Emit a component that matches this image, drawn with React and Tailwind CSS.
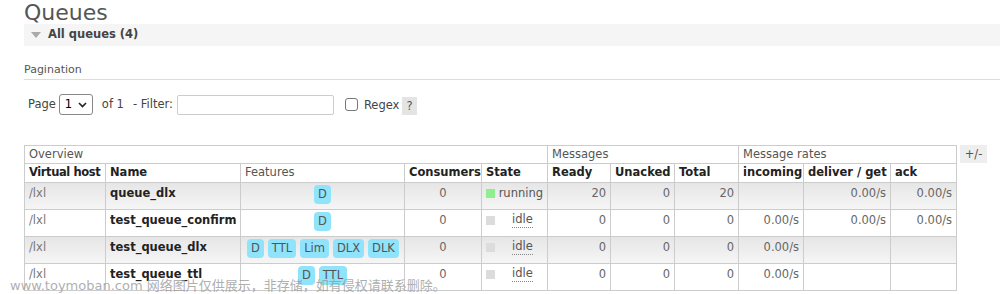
import React from "react";

const Badge = ({ children }) => (
  <span className="inline-block rounded-[4px] bg-[#8fe3fb] px-[4px] leading-[19px] h-[19px] text-[#555] mx-[2px]">
    {children}
  </span>
);

const rows = [
  { vh: "/lxl", name: "queue_dlx", features: ["D"], state: "running", ready: "20", unacked: "0", total: "20", incoming: "", deliver: "0.00/s", ack: "0.00/s" },
  { vh: "/lxl", name: "test_queue_confirm", features: ["D"], state: "idle", ready: "0", unacked: "0", total: "0", incoming: "0.00/s", deliver: "0.00/s", ack: "0.00/s" },
  { vh: "/lxl", name: "test_queue_dlx", features: ["D", "TTL", "Lim", "DLX", "DLK"], state: "idle", ready: "0", unacked: "0", total: "0", incoming: "0.00/s", deliver: "", ack: "" },
  { vh: "/lxl", name: "test_queue_ttl", features: ["D", "TTL"], state: "idle", ready: "0", unacked: "0", total: "0", incoming: "0.00/s", deliver: "", ack: "" },
];

const cellB = "border border-[#ccc] px-[4px] align-top";

export default function App() {
  return (
    <div
      className="relative w-[1000px] h-[294px] overflow-hidden bg-white text-[#444]"
      style={{ fontFamily: '"DejaVu Sans", Verdana, sans-serif' }}
    >
      <div className="pl-[24px] h-[24px] text-[22px] leading-[26px] text-[#555]">Queues</div>
      <div className="ml-[24px] h-[22px] bg-[#f5f5f5] flex items-center">
        <svg width="10" height="6" className="ml-[7px] mr-[7px]" viewBox="0 0 10 6">
          <polygon points="0,0 10,0 5,6" fill="#aaa" />
        </svg>
        <span className="text-[11.5px] font-bold text-[#444]">All queues (4)</span>
      </div>
      <div className="ml-[24px] mt-[17px] h-[17px] border-b border-[#ddd] text-[11px] leading-[14px] text-[#555]">
        Pagination
      </div>
      <div className="ml-[28px] mt-[14px] h-[21px] flex items-center text-[11.5px] text-[#444]">
        <span>Page</span>
        <span className="ml-[3px] w-[34px] h-[21px] border border-[#888] rounded-[3px] flex items-center justify-between px-[5px] text-black">
          <span>1</span>
          <svg width="9" height="6" viewBox="0 0 9 6"><polyline points="1,1 4.5,4.5 8,1" fill="none" stroke="#222" strokeWidth="1.6" /></svg>
        </span>
        <span className="ml-[9px]">of 1</span>
        <span className="ml-[9px]">- Filter:</span>
        <span className="ml-[4px] w-[157px] h-[20px] border border-[#ccc] rounded-[2px] bg-white" />
        <span className="ml-[11px] w-[13px] h-[13px] border border-[#777] rounded-[3px] bg-white" />
        <span className="ml-[6px] mt-[2px]">Regex</span>
        <span className="ml-[3px] mt-[2px] px-[4px] h-[18px] leading-[18px] bg-[#e4e4e4] text-[#555]">?</span>
      </div>

      <div className="ml-[24px] mt-[30px] flex items-start">
        <table className="table-fixed border-collapse text-[11.5px] w-[932px]">
          <colgroup>
            <col className="w-[81px]" />
            <col className="w-[135px]" />
            <col className="w-[164px]" />
            <col className="w-[77px]" />
            <col className="w-[66px]" />
            <col className="w-[63px]" />
            <col className="w-[64px]" />
            <col className="w-[64px]" />
            <col className="w-[65px]" />
            <col className="w-[87px]" />
            <col className="w-[66px]" />
          </colgroup>
          <thead>
            <tr className="h-[18px]">
              <th colSpan={5} className={`${cellB} font-normal text-left text-[#555] leading-[16px]`}>Overview</th>
              <th colSpan={3} className={`${cellB} font-normal text-left text-[#555] leading-[16px]`}>Messages</th>
              <th colSpan={3} className={`${cellB} font-normal text-left text-[#555] leading-[16px]`}>Message rates</th>
            </tr>
            <tr className="h-[19px] text-[#222] whitespace-nowrap">
              <th className={`${cellB} text-left leading-[17px] px-[3px] tracking-[-0.4px]`}>Virtual host</th>
              <th className={`${cellB} text-left leading-[17px]`}>Name</th>
              <th className={`${cellB} text-left font-normal text-[#555] leading-[17px]`}>Features</th>
              <th className={`${cellB} text-left leading-[17px]`}>Consumers</th>
              <th className={`${cellB} text-left leading-[17px]`}>State</th>
              <th className={`${cellB} text-left leading-[17px]`}>Ready</th>
              <th className={`${cellB} text-left leading-[17px]`}>Unacked</th>
              <th className={`${cellB} text-left leading-[17px]`}>Total</th>
              <th className={`${cellB} text-left leading-[17px]`}>incoming</th>
              <th className={`${cellB} text-left leading-[17px]`}>deliver / get</th>
              <th className={`${cellB} text-left leading-[17px]`}>ack</th>
            </tr>
          </thead>
          <tbody>
            {rows.map((r, i) => (
              <tr
                key={r.name}
                className={`h-[27px] ${i % 2 === 0 ? "bg-gradient-to-b from-[#e6e6e6] to-[#f6f6f6]" : "bg-white"}`}
              >
                <td className={`${cellB} pt-[2px] text-[#777]`}>{r.vh}</td>
                <td className={`${cellB} pt-[2px] font-bold text-[#222] whitespace-nowrap`}>{r.name}</td>
                <td className={`${cellB} pt-[2px] pb-[3px] text-center whitespace-nowrap px-[1px]`}>
                  {r.features.map((f) => (
                    <Badge key={f}>{f}</Badge>
                  ))}
                </td>
                <td className={`${cellB} pt-[2px] text-center text-[#666]`}>0</td>
                <td className={`${cellB} pt-[2px] text-[#555]`}>
                  <div className="flex items-center">
                    <span className={`w-[9px] h-[9px] ${r.state === "running" ? "bg-[#8fee8f]" : "bg-[#dcdcdc]"}`} />
                    {r.state === "running" ? (
                      <span className="ml-[4px]">running</span>
                    ) : (
                      <span className="ml-[17px] border-b border-dotted border-[#888] leading-[15px]">idle</span>
                    )}
                  </div>
                </td>
                <td className={`${cellB} pt-[2px] text-right text-[#666]`}>{r.ready}</td>
                <td className={`${cellB} pt-[2px] text-right text-[#666]`}>{r.unacked}</td>
                <td className={`${cellB} pt-[2px] text-right text-[#666]`}>{r.total}</td>
                <td className={`${cellB} pt-[2px] text-right text-[#666]`}>{r.incoming}</td>
                <td className={`${cellB} pt-[2px] text-right text-[#666]`}>{r.deliver}</td>
                <td className={`${cellB} pt-[2px] text-right text-[#666]`}>{r.ack}</td>
              </tr>
            ))}
          </tbody>
        </table>
        <div className="ml-[3px] w-[27px] h-[18px] bg-[#eee] text-[#555] text-[11.5px] leading-[18px] text-center">+/-</div>
      </div>

      <div
        className="absolute left-[10px] top-[278px] text-[13px] leading-[16px] text-[#999]/80 whitespace-nowrap"
        style={{ fontFamily: '"DejaVu Sans", "Noto Sans CJK SC", sans-serif' }}
      >
        www.toymoban.com 网络图片仅供展示，非存储，如有侵权请联系删除。
      </div>
    </div>
  );
}
